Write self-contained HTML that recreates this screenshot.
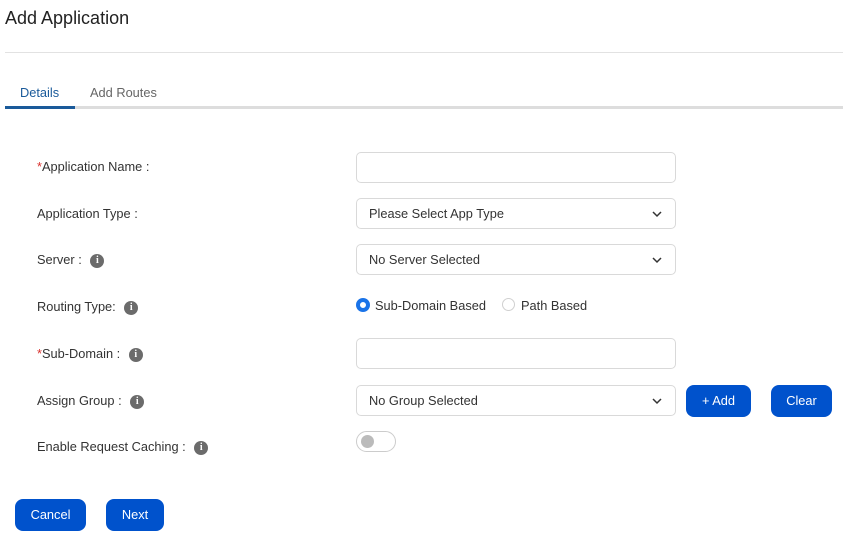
<!DOCTYPE html>
<html><head><style>
*{box-sizing:border-box;margin:0;padding:0}
body{width:843px;height:548px;background:#fff;font-family:"Liberation Sans",sans-serif;color:#333;position:relative;overflow:hidden}
.a{position:absolute}
.lbl{position:absolute;left:37px;font-size:12.8px;color:#333;line-height:16px}
.r{color:#d9302c}
.i{display:inline-block;width:14px;height:14px;border-radius:50%;background:#6b6b6b;color:#fff;font-size:10px;font-weight:bold;text-align:center;line-height:14px;vertical-align:middle;margin-left:5px;font-family:"Liberation Serif",serif}
.in{position:absolute;left:356px;width:320px;height:31px;border:1px solid #d9d9d9;border-radius:5px;font-size:12.8px;color:#333;padding-left:12px;line-height:30px}
.in svg{position:absolute;right:13px;top:12px}
.btn{position:absolute;background:#0052cc;color:#fff;border-radius:8px;font-size:12.8px;text-align:center;line-height:32px;height:32px}
</style></head><body>
<div class="a" style="left:5px;top:8px;font-size:18px;color:#222">Add Application</div>
<div class="a" style="left:5px;top:52px;width:838px;height:1px;background:#e2e2e2"></div>
<div class="a" style="left:20px;top:85px;font-size:12.8px;color:#1a5a9a">Details</div>
<div class="a" style="left:90px;top:85px;font-size:12.8px;color:#666">Add Routes</div>
<div class="a" style="left:5px;top:106px;width:838px;height:3px;background:#ddd"></div>
<div class="a" style="left:5px;top:106px;width:70px;height:3px;background:#1a5a9a"></div>

<div class="lbl" style="top:159px"><span class="r">*</span>Application Name :</div>
<div class="lbl" style="top:206px">Application Type :</div>
<div class="lbl" style="top:252px">Server : <span class="i">i</span></div>
<div class="lbl" style="top:299px">Routing Type: <span class="i">i</span></div>
<div class="lbl" style="top:346px"><span class="r">*</span>Sub-Domain : <span class="i">i</span></div>
<div class="lbl" style="top:393px">Assign Group : <span class="i">i</span></div>
<div class="lbl" style="top:439px">Enable Request Caching : <span class="i">i</span></div>

<div class="in" style="top:152px"></div>
<div class="in" style="top:198px">Please Select App Type<svg width="10" height="7" viewBox="0 0 10 7"><path d="M1 1l4 4 4-4" stroke="#333" stroke-width="1.5" fill="none"/></svg></div>
<div class="in" style="top:244px">No Server Selected<svg width="10" height="7" viewBox="0 0 10 7"><path d="M1 1l4 4 4-4" stroke="#333" stroke-width="1.5" fill="none"/></svg></div>
<div class="a" style="left:356px;top:298px;width:14px;height:14px;border-radius:50%;border:4px solid #1a73e8;background:#fff"></div>
<div class="a" style="left:375px;top:298px;font-size:12.8px">Sub-Domain Based</div>
<div class="a" style="left:502px;top:298px;width:13px;height:13px;border-radius:50%;border:1px solid #d0d0d0"></div>
<div class="a" style="left:521px;top:298px;font-size:12.8px">Path Based</div>
<div class="in" style="top:338px"></div>
<div class="in" style="top:385px">No Group Selected<svg width="10" height="7" viewBox="0 0 10 7"><path d="M1 1l4 4 4-4" stroke="#333" stroke-width="1.5" fill="none"/></svg></div>
<div class="btn" style="left:686px;top:385px;width:65px">+ Add</div>
<div class="btn" style="left:771px;top:385px;width:61px">Clear</div>
<div class="a" style="left:356px;top:431px;width:40px;height:21px;border:1px solid #ccc;border-radius:11px"><div style="position:absolute;left:4px;top:3px;width:13px;height:13px;border-radius:50%;background:#bbb"></div></div>
<div class="btn" style="left:15px;top:499px;width:71px">Cancel</div>
<div class="btn" style="left:106px;top:499px;width:58px">Next</div>
</body></html>
